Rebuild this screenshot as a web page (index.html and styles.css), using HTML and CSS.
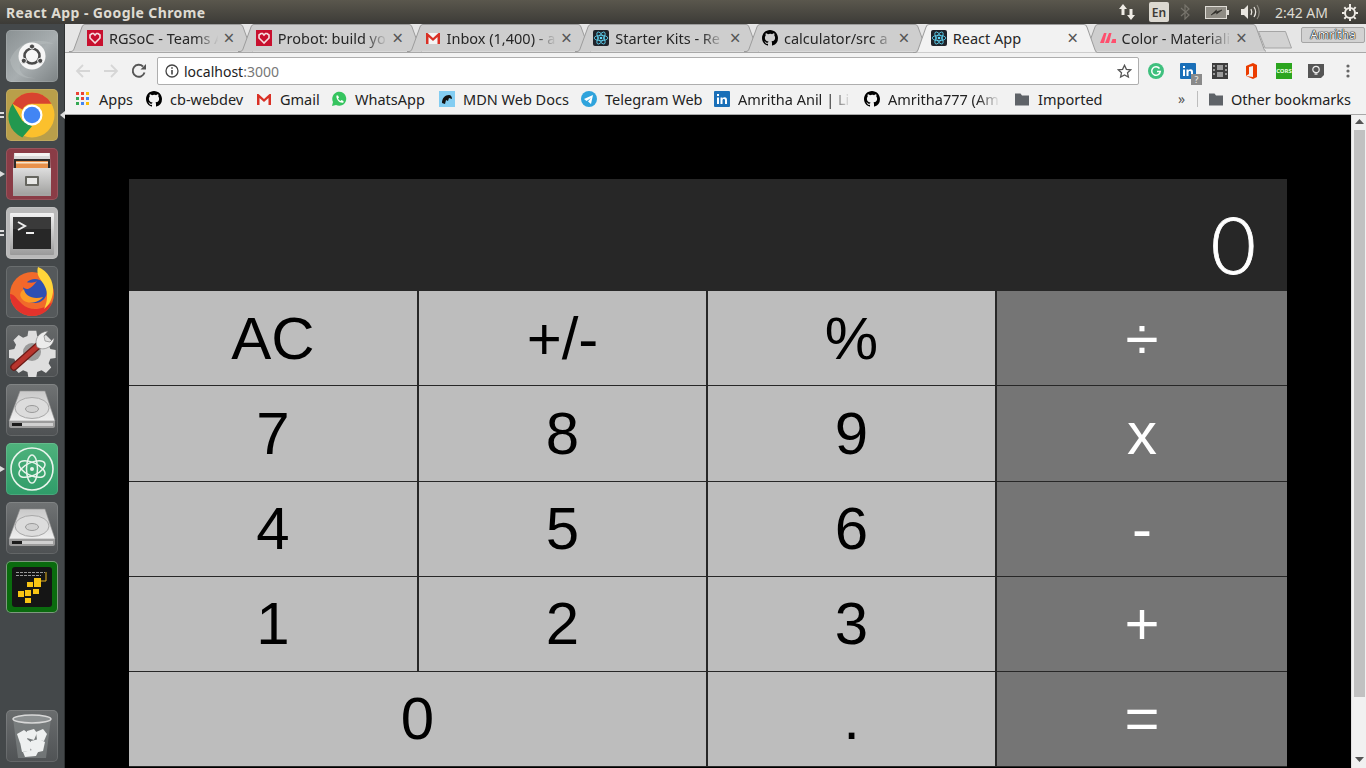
FILE: index.html
```html
<!DOCTYPE html>
<html lang="en">
<head>
<meta charset="utf-8">
<title>React App</title>
<link rel="stylesheet" href="styles.css">
</head>
<body>
<svg class="defs" width="0" height="0" aria-hidden="true">
  <defs>
    <linearGradient id="diskbody" x1="0" y1="0" x2="0" y2="1"><stop offset="0" stop-color="#c9c9c9"/><stop offset="1" stop-color="#efefef"/></linearGradient>
    <linearGradient id="termframe" x1="0" y1="0" x2="0" y2="1"><stop offset="0" stop-color="#f2f2f2"/><stop offset="1" stop-color="#9a9a9a"/></linearGradient>
    <linearGradient id="cabinet" x1="0" y1="0" x2="0" y2="1"><stop offset="0" stop-color="#dedede"/><stop offset="1" stop-color="#a3a3a1"/></linearGradient>
    <symbol id="gh" viewBox="0 0 16 16"><path d="M8 0C3.58 0 0 3.58 0 8c0 3.54 2.29 6.53 5.47 7.59.4.07.55-.17.55-.38v-1.34c-2.23.48-2.69-1.07-2.69-1.07-.36-.93-.89-1.18-.89-1.18-.73-.5.05-.49.05-.49.8.06 1.23.82 1.23.82.71 1.22 1.87.87 2.33.66.07-.52.28-.87.5-1.07-1.78-.2-3.64-.89-3.64-3.95 0-.87.31-1.59.82-2.15-.08-.2-.36-1.02.08-2.12 0 0 .67-.21 2.2.82A7.7 7.7 0 0 1 8 3.87c.68 0 1.36.09 2 .27 1.53-1.04 2.2-.82 2.2-.82.44 1.1.16 1.92.08 2.12.51.56.82 1.27.82 2.15 0 3.07-1.87 3.75-3.65 3.95.29.25.54.73.54 1.48v2.19c0 .21.15.46.55.38A8 8 0 0 0 16 8c0-4.42-3.58-8-8-8z"/></symbol>
    <symbol id="heart" viewBox="0 0 16 16"><rect width="16" height="16" fill="#c8102e"/><path d="M8 13 3 8V5l2-1.500h1.500L8 5l1.500-1.500H11L13 5v3z" fill="none" stroke="#f6dfe0" stroke-width="1.600"/></symbol>
    <symbol id="gmail" viewBox="0 0 16 16"><path d="M1 3h14v11h-14z" fill="#f4f4f4"/><path d="M1 14V3h1.500L8 8l5.500-5H15v11h-2.500V7L8 11 3.500 7v7z" fill="#d93025"/></symbol>
    <symbol id="react" viewBox="0 0 16 16"><rect width="16" height="16" rx="2" fill="#20232a"/><g fill="none" stroke="#61dafb" stroke-width=".8"><ellipse cx="8" cy="8" rx="6.800" ry="2.700"/><ellipse cx="8" cy="8" rx="6.800" ry="2.700" transform="rotate(60 8 8)"/><ellipse cx="8" cy="8" rx="6.800" ry="2.700" transform="rotate(120 8 8)"/></g><circle cx="8" cy="8" r="1.300" fill="#61dafb"/></symbol>
    <symbol id="folder" viewBox="0 0 16 16"><path d="M1 2.500h5.500L8 4.500h7v10H1z" fill="#5f6368"/></symbol>
    <symbol id="linkedin" viewBox="0 0 16 16"><rect width="16" height="16" rx="1" fill="#1a6fb8"/><path d="M3 6.500h2V13H3zM3 3h2v2H3zM6.500 6.500h2v1c.5-.8 1.200-1.200 2.200-1.200 1.700 0 2.300 1.100 2.300 2.900V13h-2V9.500c0-1-.3-1.500-1.200-1.500-.9 0-1.300.6-1.300 1.600V13h-2z" fill="#fff"/></symbol>
    <symbol id="tabshape" viewBox="0 0 184 28" preserveAspectRatio="none"><path d="M0 27.500h2c1.500 0 2.500-1 3-2.500L13 3c.5-1.500 1.500-2.500 3-2.500h155c1.500 0 2.500 1 3 2.500l8 22c.5 1.500 1.500 2.500 3 2.500"/></symbol>
    <symbol id="disk" viewBox="0 0 52 52">
      <path d="M14 7h25l10 30H3z" fill="url(#diskbody)" stroke="#8f8f8f" stroke-width=".6"/>
      <ellipse cx="26" cy="24" rx="17" ry="10.500" fill="#dcdcdc" stroke="#a8a8a8"/>
      <ellipse cx="26" cy="25" rx="6.500" ry="3.500" fill="#d0d0d0" stroke="#9a9a9a"/>
      <path d="M3 37h46v5c0 1-1 2-2 2H5c-1 0-2-1-2-2z" fill="#9c9c9c"/>
      <path d="M6 39h10v3H6z" fill="#1c1c1c"/>
      <path d="M16 39h31v3H16z" fill="#d0d0d0"/>
    </symbol>
  </defs>
</svg>

<header class="topbar">
  <div class="win-title">React App - Google Chrome</div>
  <div class="indicators">
    <svg class="ind-net" width="18" height="18" viewBox="0 0 18 18"><path d="M5 1 1 6h2.500v6h3V6H9zM13 17l4-5h-2.500V6h-3v6H9z" fill="#efece6"/></svg>
    <span class="ind-lang">En</span>
    <svg class="ind-bt" width="10" height="16" viewBox="0 0 10 16"><path d="M1 4l8 7-4 4V1l4 4-8 7" fill="none" stroke="#77746c" stroke-width="1.200"/></svg>
    <svg class="ind-bat" width="25" height="13" viewBox="0 0 25 13"><rect x=".5" y=".5" width="21" height="12" fill="#8f8c84" stroke="#dfdcd6"/><rect x="22" y="4" width="2" height="5" fill="#dfdcd6"/><path d="M6 9l6-3-.5 2L17 4l-6 2 .5-2z" fill="#2f2d28" stroke="#2f2d28" stroke-width=".6"/></svg>
    <svg class="ind-vol" width="20" height="16" viewBox="0 0 20 16"><path d="M1 5h3l4-4v14l-4-4H1z" fill="#e8e5df"/><path d="M11 5c1 2 1 4 0 6M14 3c2 3 2 7 0 10" fill="none" stroke="#e8e5df" stroke-width="1.300"/><path d="M17 1c3 4 3 10 0 14" fill="none" stroke="#8b887f" stroke-width="1.200"/></svg>
    <span class="ind-clock">2:42 AM</span>
    <svg class="ind-gear" width="18" height="18" viewBox="0 0 18 18"><circle cx="9" cy="10" r="5" fill="none" stroke="#efece6" stroke-width="2"/><path d="M9 1v7" stroke="#efece6" stroke-width="2"/><path d="M9 15.500v2.500M1 10h2.500M14.500 10H17M3.300 4.300l1.800 1.800M12.900 5.900l1.800-1.800M3.300 15.700l1.800-1.800M12.900 14.100l1.800 1.800" stroke="#efece6" stroke-width="2"/></svg>
  </div>
</header>

<div class="desktop">
  <nav class="dock">
    <div class="tile tile-ubuntu">
      <svg viewBox="0 0 52 52"><path d="M4 30C10 14 28 6 48 14 40 12 20 14 14 34 12 44 20 48 30 48 16 50 6 42 4 30z" fill="#c3c8c9" fill-opacity=".35"/><circle cx="26" cy="26" r="13.500" fill="#f6f6f6"/><circle cx="26" cy="26" r="7.500" fill="none" stroke="#4a4a4a" stroke-width="2.600"/><circle cx="26" cy="16.500" r="2.600" fill="#4a4a4a" stroke="#f6f6f6"/><circle cx="17.800" cy="30.800" r="2.600" fill="#4a4a4a" stroke="#f6f6f6"/><circle cx="34.200" cy="30.800" r="2.600" fill="#4a4a4a" stroke="#f6f6f6"/></svg>
    </div>
    <div class="tile tile-chrome has-pips has-active">
      <svg viewBox="0 0 52 52"><circle cx="26" cy="26" r="22.500" fill="#fbc02d"/><path d="M26 3.500A22.500 22.500 0 0 1 45.500 14.750H26a11.250 11.250 0 0 0-9.740 5.630L6.500 14.750A22.500 22.500 0 0 1 26 3.500z" fill="#d8432f"/><path d="M6.500 14.750l9.760 16.880 9.740 5.620L16.260 48.400A22.500 22.500 0 0 1 6.500 14.750z" fill="#22984f"/><circle cx="26" cy="26" r="10.500" fill="#fff"/><circle cx="26" cy="26" r="8.300" fill="#4285f4"/></svg>
    </div>
    <div class="tile tile-files has-pip">
      <svg viewBox="0 0 52 52"><path d="M8 5h36l1 43H7z" fill="url(#cabinet)"/><path d="M9 5h34v3H9z" fill="#f4f4f2"/><path d="M8 11h36v9H8z" fill="#2d2b29"/><path d="M10 13h32v7H10z" fill="#e8914a"/><path d="M10 14h32v1.500H10z" fill="#f6e5cc"/><path d="M7 20h38v26H7z" fill="url(#cabinet)"/><rect x="19" y="28" width="14" height="10" rx="1" fill="#66665f"/><rect x="21" y="30" width="10" height="6" fill="#e8e8e6"/></svg>
    </div>
    <div class="tile tile-term has-pips">
      <svg viewBox="0 0 52 52"><rect x="4" y="6" width="44" height="42" rx="1" fill="url(#termframe)"/><rect x="7" y="10" width="38" height="32" fill="#272727"/><path d="M7 10h38v12H7z" fill="#3a3a3a"/><path d="M12 15l7 4-7 4" fill="none" stroke="#eee" stroke-width="2"/><path d="M20 26h8" stroke="#eee" stroke-width="2"/></svg>
    </div>
    <div class="tile tile-ff">
      <svg viewBox="0 0 52 52"><circle cx="26" cy="28" r="22" fill="#f16a2a"/><path d="M4 28a22 22 0 0 0 22 22c10 0 18-6 20-14-8 8-22 10-30 2C10 32 8 28 4 28z" fill="#e3332c"/><circle cx="29" cy="25" r="12" fill="#2d4fb3"/><path d="M18 23c1 7 9 11 19 8-4 6-16 8-21 2-3-4-2-7 2-10z" fill="#fb9b25"/><path d="M15 12c3 5 12 6 16 3-4 5-6 7-9 8-4 1-8-5-7-11z" fill="#f5662a"/><path d="M32 1c10 4 16 14 15 25-1 8-4 13-9 17 3-6 4-13 2-20-2-6-6-9-8-14-.8-3-.7-6 0-8z" fill="#ffd53a"/></svg>
    </div>
    <div class="tile tile-tool">
      <svg viewBox="0 0 52 52"><path d="M22 3h9l1 6 5 2 5-3 6 6-3 5 2 5 6 1v9l-6 1-2 5 3 5-6 6-5-3-5 2-1 6h-9l-1-6-5-2-5 3-6-6 3-5-2-5-6-1v-9l6-1 2-5-3-5 6-6 5 3 5-2z" fill="#dedede" transform="translate(3 3) scale(.88)"/><circle cx="26" cy="27" r="9" fill="#9a9a9a"/><path d="M8 42 34 19" stroke="#6d1b17" stroke-width="7.500" stroke-linecap="round"/><path d="M8 42 34 19" stroke="#b8352e" stroke-width="5" stroke-linecap="round"/><path d="M31 22c-3-7 1-15 11-16l-4 5 1 5 5 1 4-4c0 8-10 14-17 9z" fill="#ececec" stroke="#777" stroke-width=".6"/></svg>
    </div>
    <div class="tile tile-disk"><svg viewBox="0 0 52 52"><use href="#disk"/></svg></div>
    <div class="tile tile-atom has-pip">
      <svg viewBox="0 0 52 52"><circle cx="26" cy="26" r="21" fill="none" stroke="#e8f4ec" stroke-width="1.600"/><g fill="none" stroke="#e8f4ec" stroke-width="1.500"><ellipse cx="26" cy="26" rx="14" ry="6.500" transform="rotate(25 26 26)"/><ellipse cx="26" cy="26" rx="14" ry="6.500" transform="rotate(-25 26 26)"/><ellipse cx="26" cy="26" rx="14" ry="5.500" transform="rotate(90 26 26)"/></g><circle cx="26" cy="26" r="2" fill="#e8f4ec"/></svg>
    </div>
    <div class="tile tile-disk"><svg viewBox="0 0 52 52"><use href="#disk"/></svg></div>
    <div class="tile tile-app">
      <svg viewBox="0 0 52 52"><rect x="6" y="6" width="40" height="40" rx="3" fill="#151515"/><path d="M10 11.500h29M10 14.500h25" stroke="#999" stroke-width="1.200" stroke-dasharray="3 1"/><path d="M40 11v9h-5" fill="none" stroke="#e8b21c"/><g fill="#f7c414"><rect x="28" y="17" width="7" height="9"/><rect x="21" y="21" width="6" height="5"/><rect x="27" y="28" width="6" height="5"/><rect x="19" y="29" width="6" height="6"/><rect x="12" y="30" width="6" height="6"/><rect x="19" y="37" width="6" height="5"/></g></svg>
    </div>
    <div class="tile tile-trash">
      <svg viewBox="0 0 52 52"><path d="M7 8l5 40h28l5-40z" fill="#8b8f90" fill-opacity=".55"/><ellipse cx="26" cy="9" rx="19" ry="4" fill="#8c9091" stroke="#d8d8d8" stroke-width="1.500"/><g fill="#eef0f0"><path d="M11 24l7-4 4 3-1 7-7 3z"/><path d="M21 21l7-2 3 4-3 7-7-2z"/><path d="M30 22l7-3 4 5-3 7-7-1z"/><path d="M14 32l7-3 5 4-2 8-8 1z"/><path d="M25 31l8-2 6 3-2 9-9 2-4-5z"/><path d="M17 42l9-2 6 2-2 4-11 1z"/></g></svg>
    </div>
  </nav>

  <main class="browser">
    <div class="tabstrip">
      <div class="tab">
        <svg class="tab-bg" aria-hidden="true"><use href="#tabshape"/></svg>
        <svg class="fav"><use href="#heart"/></svg><span class="tab-title">RGSoC - Teams A</span><span class="tab-x">×</span>
      </div>
      <div class="tab">
        <svg class="tab-bg" aria-hidden="true"><use href="#tabshape"/></svg>
        <svg class="fav"><use href="#heart"/></svg><span class="tab-title">Probot: build yo</span><span class="tab-x">×</span>
      </div>
      <div class="tab">
        <svg class="tab-bg" aria-hidden="true"><use href="#tabshape"/></svg>
        <svg class="fav"><use href="#gmail"/></svg><span class="tab-title">Inbox (1,400) - a</span><span class="tab-x">×</span>
      </div>
      <div class="tab">
        <svg class="tab-bg" aria-hidden="true"><use href="#tabshape"/></svg>
        <svg class="fav"><use href="#react"/></svg><span class="tab-title">Starter Kits - Re</span><span class="tab-x">×</span>
      </div>
      <div class="tab">
        <svg class="tab-bg" aria-hidden="true"><use href="#tabshape"/></svg>
        <svg class="fav"><use href="#gh"/></svg><span class="tab-title">calculator/src a</span><span class="tab-x">×</span>
      </div>
      <div class="tab tab-active">
        <svg class="tab-bg" aria-hidden="true"><use href="#tabshape"/></svg>
        <svg class="fav"><use href="#react"/></svg><span class="tab-title">React App</span><span class="tab-x">×</span>
      </div>
      <div class="tab">
        <svg class="tab-bg" aria-hidden="true"><use href="#tabshape"/></svg>
        <svg class="fav" viewBox="0 0 16 16"><path d="M0 13 4 3h2.500L4 13zM5 13 9 3h2.500L9 13zM11 13l1.500-4H16v4z" fill="#ff4f6d"/></svg><span class="tab-title">Color - Materiali</span><span class="tab-x">×</span>
      </div>
      <svg class="newtab" width="36" height="18" viewBox="0 0 36 18"><path d="M.5 .5h27l6 16.500H7z" fill="#d2d2d2" stroke="#a5a5a5"/></svg>
      <div class="profile">Amritha</div>
    </div>

    <div class="toolbar">
      <svg class="nav-ico" width="16" height="16" viewBox="0 0 16 16"><path d="M15 8H2M8 2 2 8l6 6" fill="none" stroke="#d6d6d6" stroke-width="1.800"/></svg>
      <svg class="nav-ico" width="16" height="16" viewBox="0 0 16 16"><path d="M1 8h13M8 2l6 6-6 6" fill="none" stroke="#d6d6d6" stroke-width="1.800"/></svg>
      <svg class="nav-ico" width="16" height="16" viewBox="0 0 16 16"><path d="M13.500 9.500A6 6 0 1 1 12 3.500" fill="none" stroke="#555" stroke-width="1.900"/><path d="M9.500 6.500h5.500V1z" fill="#555"/></svg>
      <div class="omnibox">
        <svg width="14" height="14" viewBox="0 0 14 14"><circle cx="7" cy="7" r="6" fill="none" stroke="#444" stroke-width="1.300"/><path d="M6.200 6h1.600v4.500H6.200zM6.200 3.300h1.600v1.500H6.200z" fill="#444"/></svg>
        <span class="url">localhost<span class="url-port">:3000</span></span>
        <svg class="star" width="15" height="15" viewBox="0 0 15 15"><path d="M7.500 1.300l1.900 4 4.300.5-3.200 3 .9 4.300-3.900-2.200-3.900 2.200.9-4.300-3.200-3 4.300-.5z" fill="none" stroke="#555" stroke-width="1.300"/></svg>
      </div>
      <div class="ext">
        <svg width="16" height="16" viewBox="0 0 16 16"><circle cx="8" cy="8" r="8" fill="#3fc07e"/><path d="M11.500 5.500a4.300 4.300 0 1 0 .8 3H9" fill="none" stroke="#fff" stroke-width="1.500"/></svg>
        <span class="ext-li"><svg width="16" height="16"><use href="#linkedin"/></svg><span class="ext-badge">?</span></span>
        <svg width="16" height="16" viewBox="0 0 16 16"><rect width="16" height="16" fill="#3c3c3c"/><path d="M1 2h2v2H1zM1 6h2v2H1zM1 10h2v2H1zM13 2h2v2h-2zM13 6h2v2h-2zM13 10h2v2h-2zM5 2h6v5H5zM5 9h6v5H5z" fill="#9a9a9a"/></svg>
        <svg width="16" height="16" viewBox="0 0 16 16"><path d="M2 3l7-3 4 2v12l-4 2-7-3 7 1V3L5 4v7l-3 2z" fill="#eb3c00"/></svg>
        <span class="ext-cors">CORS</span>
        <svg width="16" height="16" viewBox="0 0 16 16"><path d="M0 1h16v11l-3 3H0z" fill="#555"/><circle cx="8" cy="6.500" r="3.200" fill="none" stroke="#eee" stroke-width="1.200"/><path d="M6.500 11h3" stroke="#eee" stroke-width="1.400"/></svg>
        <svg class="ext-menu" width="4" height="16" viewBox="0 0 4 16"><circle cx="2" cy="3" r="1.600" fill="#666"/><circle cx="2" cy="8" r="1.600" fill="#666"/><circle cx="2" cy="13" r="1.600" fill="#666"/></svg>
      </div>
    </div>

    <div class="bookmarks">
      <span class="bm bm-apps"><svg width="14" height="14" viewBox="0 0 14 14"><rect width="3" height="3" fill="#ea4335"/><rect x="5" width="3" height="3" fill="#ea4335"/><rect x="10" width="3" height="3" fill="#fbbc05"/><rect y="5" width="3" height="3" fill="#34a853"/><rect x="5" y="5" width="3" height="3" fill="#ea4335"/><rect x="10" y="5" width="3" height="3" fill="#4285f4"/><rect y="10" width="3" height="3" fill="#34a853"/><rect x="5" y="10" width="3" height="3" fill="#4285f4"/><rect x="10" y="10" width="3" height="3" fill="#fbbc05"/></svg>Apps</span>
      <span class="bm bm-cb"><svg class="fav"><use href="#gh"/></svg>cb-webdev</span>
      <span class="bm bm-gm"><svg class="fav"><use href="#gmail"/></svg>Gmail</span>
      <span class="bm bm-wa"><svg class="fav" viewBox="0 0 16 16"><path d="M1 15l1-4a7 7 0 1 1 3 3z" fill="#36c45f"/><path d="M5.500 4.500l1.500 0 1 2-1 1c.5 1 1.500 2 2.500 2.500l1-1 2 1v1.500c-3 1.500-8-3-7-7z" fill="#fff"/></svg>WhatsApp</span>
      <span class="bm bm-mdn"><svg class="fav" viewBox="0 0 16 16"><rect width="16" height="16" fill="#83cdf2"/><path d="M3 12c0-5 3-8 7-8 2 0 3 2 3 4l-3-1-1 3-2-1-1 4z" fill="#111"/></svg>MDN Web Docs</span>
      <span class="bm bm-tg"><svg class="fav" viewBox="0 0 16 16"><circle cx="8" cy="8" r="8" fill="#2fa3dc"/><path d="M3 8l9-4-2 9-3-2.500 3-3.500-4.500 3z" fill="#fff"/></svg>Telegram Web</span>
      <span class="bm bm-li"><svg class="fav"><use href="#linkedin"/></svg><span class="bm-fade bm-fade-li">Amritha Anil | Li</span></span>
      <span class="bm bm-gh2"><svg class="fav"><use href="#gh"/></svg><span class="bm-fade bm-fade-gh">Amritha777 (Am</span></span>
      <span class="bm bm-imp"><svg class="fav"><use href="#folder"/></svg>Imported</span>
      <span class="bm-more">»</span>
      <span class="bm-sep"></span>
      <span class="bm bm-other"><svg class="fav"><use href="#folder"/></svg>Other bookmarks</span>
    </div>

    <div class="viewport">
      <div class="page">
        <div class="calculator">
          <div class="display">0</div>
          <div class="keys">
            <button class="key">AC</button>
            <button class="key">+/-</button>
            <button class="key">%</button>
            <button class="key key-op">÷</button>
            <button class="key">7</button>
            <button class="key">8</button>
            <button class="key">9</button>
            <button class="key key-op">x</button>
            <button class="key">4</button>
            <button class="key">5</button>
            <button class="key">6</button>
            <button class="key key-op">-</button>
            <button class="key">1</button>
            <button class="key">2</button>
            <button class="key">3</button>
            <button class="key key-op">+</button>
            <button class="key key-zero">0</button>
            <button class="key">.</button>
            <button class="key key-op">=</button>
          </div>
        </div>
      </div>
      <div class="scrollbar">
        <svg width="9" height="5" viewBox="0 0 9 5"><path d="M4.500 0 9 5H0z" fill="#555"/></svg>
        <div class="thumb"></div>
        <svg class="arrow-down" width="9" height="5" viewBox="0 0 9 5"><path d="M0 0h9L4.500 5z" fill="#555"/></svg>
      </div>
    </div>
  </main>
</div>
</body>
</html>
```

FILE: styles.css
```css
* { box-sizing: border-box; }
html, body { margin: 0; height: 100%; overflow: hidden; }
body {
  display: flex;
  flex-direction: column;
  width: 1366px;
  height: 768px;
  background: #000;
  font-family: "Noto Sans", "Open Sans", sans-serif;
}
.defs { position: absolute; }

/* top panel */
.topbar {
  height: 24px;
  flex: none;
  display: flex;
  align-items: center;
  justify-content: space-between;
  background: linear-gradient(#5a574d, #3c3b37);
  color: #dfdbd2;
}
.win-title { padding-left: 6px; font-size: 14px; font-weight: 700; letter-spacing: .4px; }
.indicators { display: flex; align-items: center; height: 24px; }
.ind-net { margin-right: 13px; }
.ind-lang {
  width: 20px; height: 20px;
  background: #dcd9d1; color: #3c3b37;
  border-radius: 2px;
  font-size: 12px; font-weight: 600;
  display: flex; align-items: center; justify-content: center;
  margin-right: 11px;
}
.ind-bt { margin-right: 15px; }
.ind-bat { margin-right: 10px; }
.ind-vol { margin-right: 15px; }
.ind-clock { font-size: 14px; color: #dfdbd2; margin-right: 13px; }
.ind-gear { margin-right: 7px; }

.desktop { flex: 1; display: flex; min-height: 0; }

/* launcher */
.dock {
  width: 65px;
  flex: none;
  display: flex;
  flex-direction: column;
  gap: 7px;
  padding: 6px 7px 6px 6px;
  background: #44484a;
  border-right: 1px solid #2f3233;
}
.tile {
  position: relative;
  width: 52px; height: 52px;
  flex: none;
  border-radius: 5px;
  background: linear-gradient(#6b6e6f, #4b4e50);
  box-shadow: inset 0 0 0 1px rgba(255,255,255,.12);
}
.tile svg { display: block; width: 52px; height: 52px; }
.tile-ubuntu { background: linear-gradient(135deg, #8a9193, #a8aeb0 55%, #7c8284); }
.tile-chrome { background: #b99f4a; }
.tile-files { background: #8a3c46; }
.tile-term { background: #b9b9b9; }
.tile-ff { background: #55595b; }
.tile-tool { background: linear-gradient(#66696a, #4e5153); }
.tile-disk { background: linear-gradient(#707374, #4e5153); }
.tile-atom { background: linear-gradient(#4fb27c, #2f9c69); }
.tile-app { background: #0a6b0e; box-shadow: inset 0 0 0 1px #7d9a7e; }
.tile-trash { margin-top: auto; background: linear-gradient(#6a6d6e, #505355); }
.has-pip::before,
.has-pips::before {
  content: "";
  position: absolute;
  left: -6px; top: 23px;
  width: 0; height: 0;
  border-left: 5px solid #dcdcdc;
  border-top: 3.500px solid transparent;
  border-bottom: 3.500px solid transparent;
}
.has-pips::before {
  width: 4px; height: 2px;
  border: 0;
  top: 23px;
  background: #dcdcdc;
  box-shadow: 0 4px 0 #dcdcdc;
}
.has-active::after {
  content: "";
  position: absolute;
  right: -7px; top: 22px;
  border-right: 5px solid #dcdcdc;
  border-top: 4px solid transparent;
  border-bottom: 4px solid transparent;
}

/* browser */
.browser {
  flex: 1;
  min-width: 0;
  display: flex;
  flex-direction: column;
  background: #f2f2f2;
}
.tabstrip {
  height: 29px;
  flex: none;
  display: flex;
  padding: 0 0 0 4px;
  background: #e6e6e6;
  position: relative;
  border-bottom: 1px solid #a8a8a8;
}
.tab {
  position: relative;
  width: 168.75px;
  height: 28px;
  flex: none;
  display: flex;
  align-items: center;
  padding: 0 0 0 18px;
  color: #262626;
  font-size: 14.5px;
}
.tab-bg {
  position: absolute;
  left: 0; top: 0;
  width: 184px; height: 28px;
  fill: #cecece;
  stroke: #9c9c9c;
  stroke-width: 1;
}
.tab-active { z-index: 2; }
.tab-active .tab-bg { height: 29px; fill: #f2f2f2; }
.fav { width: 16px; height: 16px; flex: none; position: relative; }
.tab-title {
  position: relative;
  width: 114px;
  margin-left: 6px;
  white-space: nowrap;
  overflow: hidden;
  -webkit-mask-image: linear-gradient(to right, #000 76%, transparent 96%);
  mask-image: linear-gradient(to right, #000 76%, transparent 96%);
}
.tab-active .tab-title {
  -webkit-mask-image: none;
  mask-image: none;
}
.tab-x {
  position: relative;
  width: 12px;
  color: #555;
  font-size: 19px;
  line-height: 16px;
  text-align: center;
}
.newtab { flex: none; margin: 7px 0 0 8px; position: relative; }
.profile {
  position: absolute;
  right: 1px; top: 3px;
  width: 64px; height: 16px;
  border: 1px solid #a5a5a5;
  border-radius: 2px;
  background: #d2d2d2;
  color: #f2f2f2;
  font-size: 12px;
  line-height: 14px;
  text-align: center;
  text-shadow: 0 0 1px #000, 0 0 1px #000, 0 0 1px #000;
}

.toolbar {
  height: 33px;
  flex: none;
  display: flex;
  align-items: center;
  padding: 3px 0 0 10px;
  background: #f2f2f2;
}
.nav-ico { flex: none; margin-right: 12px; }
.omnibox {
  width: 982px;
  height: 28px;
  flex: none;
  display: flex;
  align-items: center;
  gap: 5px;
  margin-left: -2px;
  padding: 0 6px 0 7px;
  background: #fff;
  border: 1px solid #aeaeae;
  border-radius: 2px;
  font-size: 14px;
  color: #222;
}
.url { flex: 1; }
.url-port { color: #777; }
.ext { display: flex; align-items: center; gap: 16px; margin-left: 9px; }
.ext svg { display: block; flex: none; }
.ext-menu { margin-left: 6px; }
.ext-li { position: relative; display: block; width: 16px; height: 16px; }
.ext-badge {
  position: absolute;
  right: -6px; bottom: -6px;
  width: 11px; height: 11px;
  background: #8a8a8a;
  color: #eee;
  font-size: 9px;
  line-height: 11px;
  text-align: center;
}
.ext-cors {
  width: 16px; height: 16px;
  background: #2ba51e;
  color: #e8ffe0;
  font-size: 6px;
  font-weight: 700;
  line-height: 16px;
  text-align: center;
  overflow: hidden;
}

.bookmarks {
  height: 29px;
  flex: none;
  display: flex;
  align-items: center;
  padding: 0 0 3px 11px;
  background: #f2f2f2;
  border-bottom: 1px solid #a8a8a8;
  font-size: 14.500px;
  color: #222;
  white-space: nowrap;
}
.bm { display: flex; align-items: center; gap: 8px; flex: none; }
.bm svg { flex: none; }
.bm-apps { width: 70px; gap: 9px; }
.bm-cb { width: 110px; }
.bm-gm { width: 75px; }
.bm-wa { width: 108px; }
.bm-mdn { width: 142px; }
.bm-tg { width: 133px; }
.bm-li { width: 150px; }
.bm-gh2 { width: 150px; }
.bm-imp { width: 164px; }
.bm-fade {
  overflow: hidden;
  -webkit-mask-image: linear-gradient(to right, #000 80%, transparent 100%);
  mask-image: linear-gradient(to right, #000 80%, transparent 100%);
}
.bm-fade-li { width: 113px; }
.bm-fade-gh { width: 112px; }
.bm-more { width: 19px; color: #555; font-size: 14px; flex: none; }
.bm-sep { width: 1px; height: 16px; background: #bdbdbd; margin-right: 10px; flex: none; }
.bm-other { gap: 7px; }

/* page */
.viewport { flex: 1; display: flex; min-height: 0; background: #000; }
.page { flex: 1; min-width: 0; padding: 64px 64px 0; overflow: hidden; }
.calculator { width: 1158px; background: #272727; }
.display {
  height: 112px;
  padding: 19px 31px 0 0;
  text-align: right;
  color: #fff;
  font-family: Lato, "Liberation Sans", Arial, sans-serif;
  font-weight: 300;
  font-size: 78px;
  line-height: 92px;
  -webkit-text-stroke: .8px #fff;
}
.keys {
  display: grid;
  grid-template-columns: 288px 287px 287px 290px;
  grid-template-rows: 94px 95px 94px 94px 94px;
  column-gap: 2px;
  row-gap: 1px;
  padding-bottom: 1px;
}
.key {
  border: 0;
  padding: 1px 0 0;
  background: #bdbdbd;
  color: #000;
  font-family: "Liberation Sans", Arial, sans-serif;
  font-size: 60px;
  line-height: 94px;
  text-align: center;
}
.key:nth-child(n+9):nth-child(-n+12) { padding: 0 0 1px; }
.key:nth-child(n+13):nth-child(-n+16) { padding: 0 0 2px; }
.key:nth-child(n+17) { padding: 0 0 3px; }
.key-op { background: #757575; color: #fff; }
.key-zero { grid-column: span 2; }

.scrollbar {
  width: 15px;
  flex: none;
  display: flex;
  flex-direction: column;
  align-items: center;
  padding: 4px 0 6px;
  background: #f1f1f1;
  border-left: 1px solid #e0e0e0;
}
.thumb { width: 11px; height: 567px; flex: none; margin-top: 6px; background: #c1c1c1; }
.arrow-down { margin-top: auto; }
```
